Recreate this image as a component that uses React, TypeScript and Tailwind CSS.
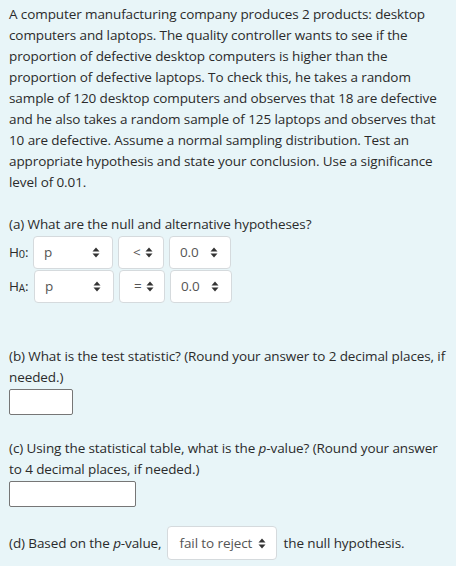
import React from 'react';

const font = { fontFamily: '"Open Sans", "Noto Sans", sans-serif' };

function Arrows() {
  return (
    <svg width="8" height="11" viewBox="0 0 8 11" className="shrink-0">
      <path d="M4 0.5 L7.5 4.5 L0.5 4.5 Z" fill="#333" />
      <path d="M4 10.5 L7.5 6.5 L0.5 6.5 Z" fill="#333" />
    </svg>
  );
}

function Select({ value, className }: { value: string; className: string }) {
  return (
    <div
      className={`h-[33px] flex items-center justify-between bg-white border border-[#d5dadd] rounded-[4px] text-[#555] ${className}`}
    >
      <span>{value}</span>
      <Arrows />
    </div>
  );
}

export default function App() {
  return (
    <div className="w-[456px] h-[566px] bg-[#e8f5f8] text-[#2b2b2b] text-[13.5px]/[21px] px-[9px] pt-[4px] tracking-[-0.1px]" style={font}>
      <p className="leading-[21px] whitespace-nowrap">
        A computer manufacturing company produces 2 products: desktop
        <br />
        computers and laptops. The quality controller wants to see if the
        <br />
        proportion of defective desktop computers is higher than the
        <br />
        proportion of defective laptops. To check this, he takes a random
        <br />
        sample of 120 desktop computers and observes that 18 are defective
        <br />
        and he also takes a random sample of 125 laptops and observes that
        <br />
        10 are defective. Assume a normal sampling distribution. Test an
        <br />
        appropriate hypothesis and state your conclusion. Use a significance
        <br />
        level of 0.01.
      </p>

      <p className="mt-[21px] leading-[21px]">(a) What are the null and alternative hypotheses?</p>
      <div className="flex items-center gap-[5px] mt-[1px]">
        <span className="w-[19px]">
          H<sub className="text-[11px] relative top-[1px] align-baseline">0</sub>:
        </span>
        <Select value="p" className="w-[80px] pl-[10px] pr-[12px]" />
        <Select value="<" className="w-[46px] pl-[14px] pr-[10px]" />
        <Select value="0.0" className="w-[62px] pl-[10px] pr-[12px]" />
      </div>
      <div className="flex items-center gap-[5px] mt-[1px]">
        <span className="w-[20px]">
          H<sub className="text-[10px] relative top-[1px] align-baseline">A</sub>:
        </span>
        <Select value="p" className="w-[80px] pl-[10px] pr-[12px]" />
        <Select value="=" className="w-[46px] pl-[14px] pr-[10px]" />
        <Select value="0.0" className="w-[62px] pl-[10px] pr-[12px]" />
      </div>

      <p className="mt-[43px] leading-[21px] whitespace-nowrap">
        (b) What is the test statistic? (Round your answer to 2 decimal places, if
        <br />
        needed.)
      </p>
      <div className="w-[64px] h-[26px] bg-white border border-[#767676] rounded-[2px] mt-[1px]" />

      <p className="mt-[23px] leading-[21px] whitespace-nowrap">
        (c) Using the statistical table, what is the <i>p</i>-value? (Round your answer
        <br />
        to 4 decimal places, if needed.)
      </p>
      <div className="w-[127px] h-[26px] bg-white border border-[#767676] rounded-[2px] mt-[1px]" />

      <div className="flex items-center mt-[19px]">
        <span>(d) Based on the <i>p</i>-value,</span>
        <Select value="fail to reject" className="w-[110px] h-[34px] ml-[6px] pl-[11px] pr-[10px]" />
        <span className="ml-[6px]">the null hypothesis.</span>
      </div>
    </div>
  );
}
